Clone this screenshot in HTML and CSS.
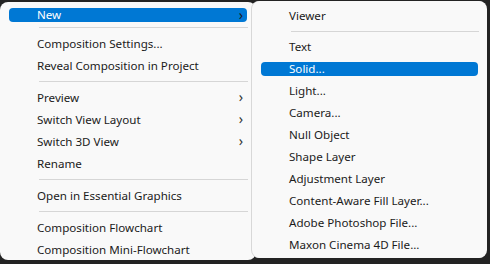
FILE: index.html
```html
<!DOCTYPE html>
<html lang="en">

<head>
    <meta charset="UTF-8">
    <title>Composition menu</title>
    <link rel="stylesheet" href="styles.css">
</head>

<body>
    <div class="desk">
        <ul class="menu menu-main">
            <li class="item active has-sub">New</li>
            <li class="sep"></li>
            <li class="item">Composition Settings...</li>
            <li class="item">Reveal Composition in Project</li>
            <li class="sep"></li>
            <li class="item has-sub">Preview</li>
            <li class="item has-sub">Switch View Layout</li>
            <li class="item has-sub">Switch 3D View</li>
            <li class="item">Rename</li>
            <li class="sep"></li>
            <li class="item">Open in Essential Graphics</li>
            <li class="sep"></li>
            <li class="item">Composition Flowchart</li>
            <li class="item">Composition Mini-Flowchart</li>
        </ul>

        <ul class="menu menu-sub">
            <li class="item">Viewer</li>
            <li class="sep"></li>
            <li class="item">Text</li>
            <li class="item active">Solid...</li>
            <li class="item">Light...</li>
            <li class="item">Camera...</li>
            <li class="item">Null Object</li>
            <li class="item">Shape Layer</li>
            <li class="item">Adjustment Layer</li>
            <li class="item">Content-Aware Fill Layer...</li>
            <li class="item">Adobe Photoshop File...</li>
            <li class="item">Maxon Cinema 4D File...</li>
            <li class="scroll-edge"></li>
        </ul>
    </div>
</body>

</html>
```

FILE: styles.css
```css
body {
    margin: 0;
    background-color: #232323;
    font-family: "Noto Sans", "Open Sans", sans-serif;
    font-size: 11.6px;
    color: #1b1b1b;
}

.desk {
    position: relative;
    width: 490px;
    height: 264px;
    overflow: hidden;
}

.menu {
    list-style: none;
    margin: 0;
    background-color: #f9f9f9;
    border-radius: 8px;
}

.menu-main {
    margin-top: 2px;
    width: 256px;
    height: 258px;
    padding: 2px 0 0;
    box-sizing: border-box;
}

.menu-sub {
    position: absolute;
    left: 252px;
    top: 1px;
    width: 235px;
    height: 257px;
    padding: 4px 0 0;
    box-sizing: border-box;
    box-shadow: -1px 0 0 #d8d8d8;
}

.item {
    position: relative;
    height: 22px;
    line-height: 22px;
    margin: 0 9px;
    padding-left: 28px;
    border-radius: 4px;
    white-space: nowrap;
}

.menu-main .item {
    line-height: 24px;
}

.item.active,
.menu-main .item.active {
    background-color: #0078d4;
    color: #fff;
    height: 14px;
    line-height: 14px;
    margin-top: 4px;
    margin-bottom: 4px;
}

.menu-main .item.active {
    margin-bottom: 3px;
}

.has-sub::after {
    content: "\203A";
    position: absolute;
    right: 4px;
    top: 0;
    font-size: 14px;
    line-height: 22px;
    color: #333;
}

.active.has-sub::after {
    line-height: 14px;
    color: #1b1b1b;
}

.sep {
    height: 1px;
    margin: 5px 8px 4px 39px;
    background-color: #d6d6d6;
}

.menu-sub .sep {
    margin: 4px 8px 4px 39px;
}

.scroll-edge {
    height: 2px;
    margin: 9px 0 0 33px;
    background-color: #ececec;
}
```
